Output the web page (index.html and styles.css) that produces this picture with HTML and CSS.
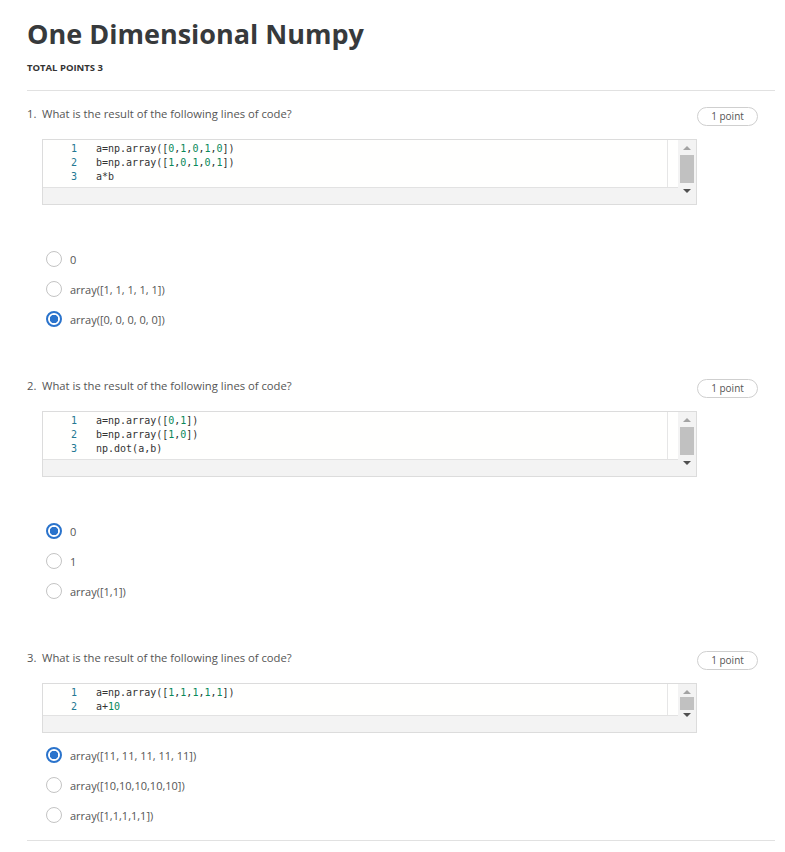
FILE: index.html
```html
<!DOCTYPE html>
<html>
<head>
<meta charset="utf-8">
<link rel="stylesheet" href="styles.css">
</head>
<body>
<div class="page">
  <h1 class="title">One Dimensional Numpy</h1>
  <div class="total">TOTAL POINTS 3</div>
  <div class="rule"></div>

  <div class="question q-first">
    <div class="q-head">
      <div class="q-text"><span class="q-num">1.</span>What is the result of the following lines of code?</div>
      <div class="badge">1 point</div>
    </div>
    <div class="code">
      <div class="code-main">
        <div class="editor">
          <div class="lines">
            <div class="ln"><span class="no">1</span><span class="src">a=np.array([<i>0</i>,<i>1</i>,<i>0</i>,<i>1</i>,<i>0</i>])</span></div>
            <div class="ln"><span class="no">2</span><span class="src">b=np.array([<i>1</i>,<i>0</i>,<i>1</i>,<i>0</i>,<i>1</i>])</span></div>
            <div class="ln"><span class="no">3</span><span class="src">a*b</span></div>
          </div>
          <div class="side"></div>
        </div>
        <div class="hscroll"></div>
      </div>
      <div class="vscroll">
        <span class="arr up"></span>
        <span class="thumb"></span>
        <span class="arr down"></span>
      </div>
    </div>
    <div class="options">
      <div class="opt"><span class="radio"></span><span>0</span></div>
      <div class="opt"><span class="radio"></span><span>array([1, 1, 1, 1, 1])</span></div>
      <div class="opt"><span class="radio on"></span><span>array([0, 0, 0, 0, 0])</span></div>
    </div>
  </div>

  <div class="question">
    <div class="q-head">
      <div class="q-text"><span class="q-num">2.</span>What is the result of the following lines of code?</div>
      <div class="badge">1 point</div>
    </div>
    <div class="code">
      <div class="code-main">
        <div class="editor">
          <div class="lines">
            <div class="ln"><span class="no">1</span><span class="src">a=np.array([<i>0</i>,<i>1</i>])</span></div>
            <div class="ln"><span class="no">2</span><span class="src">b=np.array([<i>1</i>,<i>0</i>])</span></div>
            <div class="ln"><span class="no">3</span><span class="src">np.dot(a,b)</span></div>
          </div>
          <div class="side"></div>
        </div>
        <div class="hscroll"></div>
      </div>
      <div class="vscroll">
        <span class="arr up"></span>
        <span class="thumb"></span>
        <span class="arr down"></span>
      </div>
    </div>
    <div class="options">
      <div class="opt"><span class="radio on"></span><span>0</span></div>
      <div class="opt"><span class="radio"></span><span>1</span></div>
      <div class="opt"><span class="radio"></span><span>array([1,1])</span></div>
    </div>
  </div>

  <div class="question">
    <div class="q-head">
      <div class="q-text"><span class="q-num">3.</span>What is the result of the following lines of code?</div>
      <div class="badge">1 point</div>
    </div>
    <div class="code">
      <div class="code-main">
        <div class="editor">
          <div class="lines lines-short">
            <div class="ln"><span class="no">1</span><span class="src">a=np.array([<i>1</i>,<i>1</i>,<i>1</i>,<i>1</i>,<i>1</i>])</span></div>
            <div class="ln"><span class="no">2</span><span class="src">a+<i>10</i></span></div>
          </div>
          <div class="side"></div>
        </div>
        <div class="hscroll"></div>
      </div>
      <div class="vscroll short">
        <span class="arr up"></span>
        <span class="thumb"></span>
        <span class="arr down"></span>
      </div>
    </div>
    <div class="options options-tight">
      <div class="opt"><span class="radio on"></span><span>array([11, 11, 11, 11, 11])</span></div>
      <div class="opt"><span class="radio"></span><span>array([10,10,10,10,10])</span></div>
      <div class="opt"><span class="radio"></span><span>array([1,1,1,1,1])</span></div>
    </div>
  </div>

  <div class="rule rule-end"></div>
</div>
</body>
</html>
```

FILE: styles.css
```css
* { box-sizing: border-box; }
html, body { margin: 0; padding: 0; background: #fff; }
body { font-family: "Open Sans", "Noto Sans", sans-serif; color: #555; }

.page {
  width: 785px;
  padding: 17px 10px 0 27px;
}

.title {
  margin: 0;
  font-size: 27px;
  line-height: 34px;
  font-weight: 700;
  color: #373a3c;
}

.total {
  margin-top: 11px;
  font-size: 9.5px;
  line-height: 12px;
  font-weight: 700;
  color: #333;
}

.rule {
  margin-top: 16px;
  height: 1px;
  background: #e1e1e1;
}

.rule-end { margin-top: 10px; }

.question { margin-top: 44px; }
.question.q-first { margin-top: 15px; }

.q-head {
  display: flex;
  justify-content: space-between;
  align-items: flex-start;
  padding-right: 17px;
}

.q-text {
  font-size: 11.25px;
  line-height: 16px;
  color: #555;
}

.q-num {
  display: inline-block;
  width: 15px;
}

.badge {
  margin-top: 1px;
  width: 61px;
  height: 19px;
  border: 1px solid #cfcfcf;
  border-radius: 10px;
  font-size: 10px;
  line-height: 17px;
  text-align: center;
  color: #555;
}

.code {
  margin: 13px 78px 0 15px;
  display: flex;
  border: 1px solid #dcdcdc;
  background: #f3f3f3;
}

.code-main {
  flex: 1;
  display: flex;
  flex-direction: column;
}

.editor {
  display: flex;
  background: #fffffe;
  border-bottom: 1px solid #e2e2e2;
}

.lines {
  flex: 1;
  padding: 2px 0 3px;
  border-right: 1px solid #e6e6e6;
}

.lines.lines-short { padding: 2px 0 1px; }

.side {
  width: 10px;
}

.ln {
  display: flex;
  height: 14px;
  font-family: "DejaVu Sans Mono", "Liberation Mono", monospace;
  font-size: 10px;
  line-height: 14px;
  color: #333;
}

.no {
  width: 34px;
  text-align: right;
  color: #237893;
}

.src {
  padding-left: 19px;
  white-space: pre;
}

.src i {
  font-style: normal;
  color: #09885a;
}

.hscroll {
  height: 16px;
  background: #f3f3f3;
}

.vscroll {
  width: 18px;
  display: flex;
  flex-direction: column;
  align-items: center;
  background: #f3f3f3;
  padding: 6px 0 6px;
}

.thumb {
  width: 14px;
  height: 28px;
  margin: 5px 0 6px;
  background: #c1c1c1;
}

.vscroll.short .thumb { height: 13px; margin: 3px 0 3px; }

.arr {
  width: 0;
  height: 0;
  border-left: 4px solid transparent;
  border-right: 4px solid transparent;
}

.arr.up { border-bottom: 4px solid #a3a3a3; }
.arr.down { border-top: 4px solid #505050; }

.options { margin-top: 39px; }
.options-tight { margin-top: 7px; }

.opt {
  display: flex;
  align-items: center;
  height: 30px;
  padding-left: 19px;
  font-size: 11px;
  color: #555;
}

.radio {
  width: 16px;
  height: 16px;
  margin-right: 8px;
  border-radius: 50%;
  border: 1.5px solid #c4c4c4;
  background: #fff;
  flex: none;
}

.radio.on {
  border: 2px solid #2a73cc;
  background: radial-gradient(circle, #2a73cc 0 4px, #fff 4.5px);
}
```
